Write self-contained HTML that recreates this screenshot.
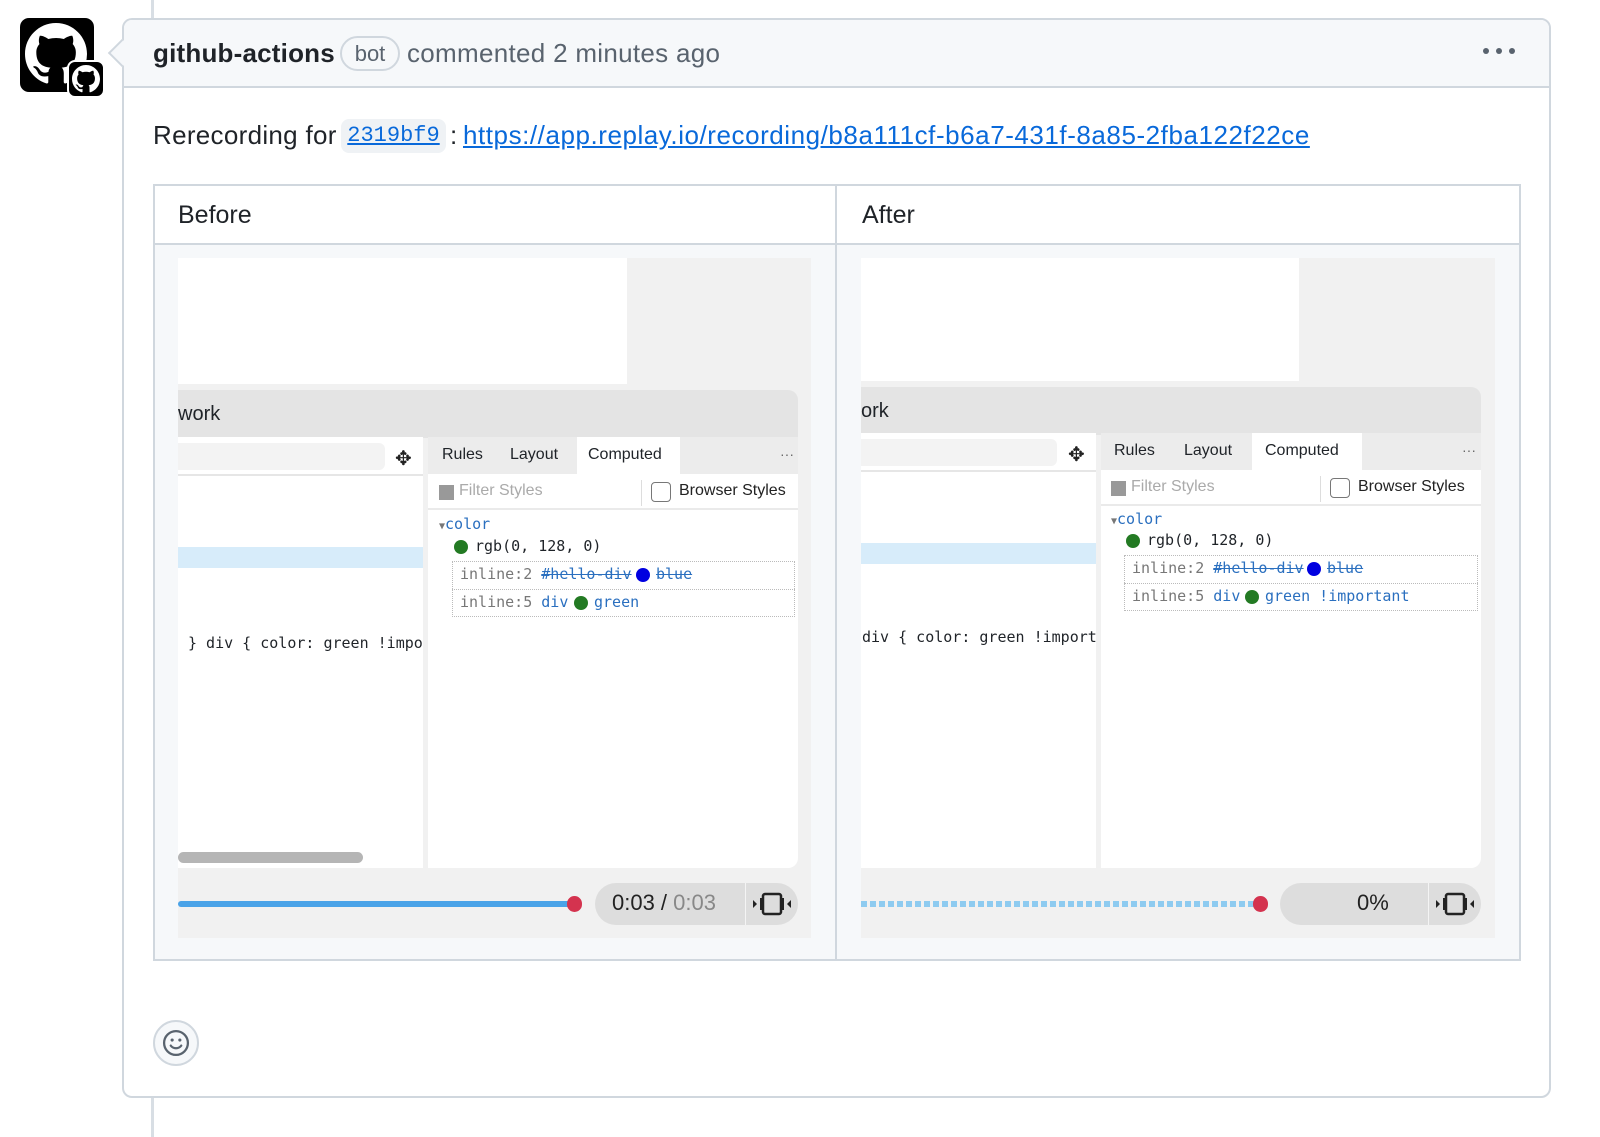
<!DOCTYPE html>
<html><head><meta charset="utf-8"><style>
*{box-sizing:border-box;margin:0;padding:0}
body{width:1600px;height:1137px;background:#fff;position:relative;overflow:hidden;font-family:"Liberation Sans",sans-serif;color:#1f2328}
.a{position:absolute}
.m{font-family:"Liberation Mono",monospace}
.mono{font-family:"DejaVu Sans Mono","Liberation Mono",monospace;font-size:15px}
</style></head><body>
<div class="a" style="left:151px;top:0;width:3px;height:1137px;background:#d8dee4"></div>
<div class="a" style="left:20px;top:18px;width:74px;height:74px;background:#000;border-radius:9px"></div>
<svg class="a" style="left:25px;top:23px" width="62" height="62" viewBox="0 0 16 16"><path fill="#fff" d="M8 0C3.58 0 0 3.58 0 8c0 3.54 2.290 6.53 5.47 7.59.4.07.55-.17.55-.38 0-.19-.01-.82-.01-1.49-2.01.37-2.53-.49-2.69-.94-.09-.23-.48-.94-.82-1.13-.28-.15-.68-.52-.01-.53.63-.01 1.08.58 1.23.82.72 1.21 1.87.87 2.33.66.07-.52.28-.87.51-1.07-1.78-.2-3.64-.89-3.64-3.95 0-.87.31-1.59.82-2.15-.08-.2-.36-1.02.08-2.12 0 0 .67-.21 2.2.82.64-.18 1.32-.27 2-.27.68 0 1.36.09 2 .27 1.53-1.04 2.2-.82 2.2-.82.44 1.1.16 1.92.08 2.12.51.56.82 1.27.82 2.15 0 3.07-1.87 3.75-3.65 3.95.29.25.54.73.54 1.48 0 1.07-.01 1.93-.01 2.2 0 .21.15.46.55.38A8.013 8.013 0 0016 8c0-4.42-3.58-8-8-8z"/></svg>
<div class="a" style="left:67px;top:60px;width:38px;height:38px;background:#000;border-radius:8px;border:2px solid #fff"></div>
<svg class="a" style="left:72px;top:65px" width="28" height="28" viewBox="0 0 16 16"><path fill="#fff" d="M8 0C3.58 0 0 3.58 0 8c0 3.54 2.29 6.53 5.47 7.59.4.07.55-.17.55-.38 0-.19-.01-.82-.01-1.49-2.01.37-2.53-.49-2.69-.94-.09-.23-.48-.94-.82-1.13-.28-.15-.68-.52-.01-.53.63-.01 1.08.58 1.23.82.72 1.21 1.87.87 2.33.66.07-.52.28-.87.51-1.07-1.78-.2-3.64-.89-3.64-3.95 0-.87.31-1.59.82-2.15-.08-.2-.36-1.02.08-2.12 0 0 .67-.21 2.2.82.64-.18 1.32-.27 2-.27.68 0 1.36.09 2 .27 1.53-1.04 2.2-.82 2.2-.82.44 1.1.16 1.92.08 2.12.51.56.82 1.27.82 2.15 0 3.07-1.87 3.75-3.65 3.95.29.25.54.73.54 1.48 0 1.07-.01 1.93-.01 2.2 0 .21.15.46.55.38A8.013 8.013 0 0016 8c0-4.42-3.58-8-8-8z"/></svg>
<div class="a" style="left:122px;top:18px;width:1429px;height:1080px;border:2px solid #d0d7de;border-radius:10px;background:#fff;overflow:hidden">
 <div style="height:68px;background:#f6f8fa;border-bottom:2px solid #d0d7de"></div>
</div>
<div class="a" style="left:112px;top:43px;width:20px;height:20px;background:#f6f8fa;border-left:2px solid #d0d7de;border-bottom:2px solid #d0d7de;transform:rotate(45deg)"></div>
<div class="a" style="left:153px;top:36px;font-size:26px;font-weight:bold;line-height:34px;letter-spacing:0.2px">github-actions</div>
<div class="a" style="left:340px;top:36px;width:60px;height:35px;border:2px solid #d0d7de;border-radius:18px;font-size:22px;color:#59636e;text-align:center;line-height:31px">bot</div>
<div class="a" style="left:407px;top:36px;font-size:26px;color:#59636e;line-height:34px;letter-spacing:0.3px">commented 2 minutes ago</div>
<div class="a" style="left:1483px;top:48px;width:32px;height:8px"><div class="a" style="left:0;top:0;width:6px;height:6px;border-radius:3px;background:#59636e"></div><div class="a" style="left:13px;top:0;width:6px;height:6px;border-radius:3px;background:#59636e"></div><div class="a" style="left:26px;top:0;width:6px;height:6px;border-radius:3px;background:#59636e"></div></div>
<div class="a" style="left:153px;top:118px;font-size:26px;line-height:34px;letter-spacing:0.3px">Rerecording for</div>
<div class="a m" style="left:341px;top:119px;width:105px;height:34px;background:#eff2f5;border-radius:8px;font-size:22px;line-height:34px;text-align:center;color:#0969da"><span style="text-decoration:underline">2319bf9</span></div>
<div class="a" style="left:450px;top:118px;font-size:26px;line-height:34px">:</div>
<div class="a" style="left:463px;top:118px;font-size:26px;line-height:34px;color:#0969da;text-decoration:underline;letter-spacing:0.55px">https://app.replay.io/recording/b8a111cf-b6a7-431f-8a85-2fba122f22ce</div>
<div class="a" style="left:153px;top:184px;width:1368px;height:777px;border:2px solid #d0d7de;background:#f6f8fa"></div>
<div class="a" style="left:155px;top:186px;width:1364px;height:59px;background:#fff;border-bottom:2px solid #d0d7de"></div>
<div class="a" style="left:835px;top:184px;width:2px;height:777px;background:#d0d7de"></div>
<div class="a" style="left:178px;top:200px;font-size:25px;line-height:30px">Before</div>
<div class="a" style="left:862px;top:200px;font-size:25px;line-height:30px">After</div>

<div class="a" style="left:178px;top:258px;width:633px;height:680px;background:#f1f1f1"></div>
<div class="a" style="left:178px;top:258px;width:449px;height:126px;background:#fff"></div>
<div class="a" style="left:178px;top:390px;width:620px;height:48px;background:#e4e4e4;border-radius:0 10px 0 0"></div>
<div class="a" style="left:178px;top:403px;font-size:20px">work</div>
<div class="a" style="left:178px;top:437px;width:245px;height:431px;background:#fff"></div>
<div class="a" style="left:178px;top:443px;width:207px;height:27px;background:#f3f3f3;border-radius:0 6px 6px 0"></div>
<div class="a" style="left:178px;top:474px;width:245px;height:2px;background:#e6e6e6"></div>
<div class="a" style="left:395px;top:446px;font-size:20px;color:#222">✥</div>
<div class="a" style="left:178px;top:547px;width:245px;height:21px;background:#d7ecfa"></div>
<div class="a mono" style="left:188px;top:634px;width:235px;overflow:hidden;white-space:nowrap">} div { color: green !important</div>
<div class="a" style="left:178px;top:852px;width:185px;height:11px;border-radius:6px;background:#b5b5b5"></div>
<div class="a" style="left:428px;top:437px;width:370px;height:431px;background:#fff;border-radius:0 0 10px 0"></div>
<div class="a" style="left:428px;top:437px;width:370px;height:37px;background:#ececec"></div>
<div class="a" style="left:577px;top:437px;width:103px;height:37px;background:#fff"></div>
<div class="a" style="left:442px;top:446px;font-size:16px">Rules</div>
<div class="a" style="left:510px;top:446px;font-size:16px">Layout</div>
<div class="a" style="left:588px;top:446px;font-size:16px">Computed</div>
<div class="a" style="left:780px;top:446px;font-size:14px;color:#666">···</div>
<div class="a" style="left:428px;top:508px;width:370px;height:2px;background:#eaeaea"></div>
<div class="a" style="left:439px;top:485px;width:15px;height:15px;background:#999"></div>
<div class="a" style="left:459px;top:482px;font-size:16px;color:#aaa">Filter Styles</div>
<div class="a" style="left:641px;top:480px;width:1px;height:26px;background:#ddd"></div>
<div class="a" style="left:651px;top:482px;width:20px;height:20px;border:1.5px solid #777;border-radius:4px"></div>
<div class="a" style="left:679px;top:482px;font-size:16px;color:#222">Browser Styles</div>
<div class="a mono" style="left:439px;top:515px;color:#2a6fbf"><span style="font-size:10px;color:#777">▼</span>color</div>
<div class="a" style="left:454px;top:540px;width:14px;height:14px;border-radius:7px;background:#237a23"></div>
<div class="a mono" style="left:475px;top:537px">rgb(0, 128, 0)</div>
<div class="a" style="left:452px;top:561px;width:343px;height:56px;border:1px dotted #bbb"></div>
<div class="a" style="left:452px;top:589px;width:343px;height:1px;border-top:1px dotted #bbb"></div>
<div class="a mono" style="left:460px;top:565px;color:#777">inline:2 <span style="color:#2a6fbf;text-decoration:line-through">#hello-div</span></div>
<div class="a" style="left:636px;top:568px;width:14px;height:14px;border-radius:7px;background:#0000e0"></div>
<div class="a mono" style="left:656px;top:565px;color:#2a6fbf;text-decoration:line-through">blue</div>
<div class="a mono" style="left:460px;top:593px;color:#777">inline:5 <span style="color:#2a6fbf">div</span></div>
<div class="a" style="left:574px;top:596px;width:14px;height:14px;border-radius:7px;background:#237a23"></div>
<div class="a mono" style="left:594px;top:593px;color:#2a6fbf">green</div>
<div class="a" style="left:178px;top:901px;width:397px;height:6px;background:#4aa3e8;border-radius:3px"></div>
<div class="a" style="left:567px;top:896px;width:15px;height:16px;border-radius:8px;background:#d4334f"></div>
<div class="a" style="left:595px;top:883px;width:203px;height:42px;background:#ddd;border-radius:21px"></div>
<div class="a" style="left:745px;top:883px;width:1px;height:42px;background:#f4f4f4"></div>
<div class="a" style="left:612px;top:890px;font-size:22px;color:#222">0:03 / <span style="color:#888">0:03</span></div>
<svg class="a" style="left:752px;top:890px" width="40" height="28" viewBox="0 0 40 28"><path d="M1 10l4 4-4 4z M39 10l-4 4 4 4z" fill="#222"/><rect x="11" y="4" width="18" height="20" rx="2" fill="none" stroke="#222" stroke-width="2.5"/><rect x="8" y="8" width="3" height="12" fill="#222"/><rect x="29" y="8" width="3" height="12" fill="#222"/></svg>

<div class="a" style="left:861px;top:258px;width:634px;height:680px;background:#f1f1f1"></div>
<div class="a" style="left:861px;top:258px;width:438px;height:123px;background:#fff"></div>
<div class="a" style="left:861px;top:387px;width:620px;height:48px;background:#e4e4e4;border-radius:0 10px 0 0"></div>
<div class="a" style="left:861px;top:400px;font-size:20px">ork</div>
<div class="a" style="left:861px;top:433px;width:235px;height:435px;background:#fff"></div>
<div class="a" style="left:861px;top:439px;width:196px;height:27px;background:#f3f3f3;border-radius:0 6px 6px 0"></div>
<div class="a" style="left:861px;top:470px;width:235px;height:2px;background:#e6e6e6"></div>
<div class="a" style="left:1068px;top:442px;font-size:20px;color:#222">✥</div>
<div class="a" style="left:861px;top:543px;width:235px;height:21px;background:#d7ecfa"></div>
<div class="a mono" style="left:862px;top:628px;width:234px;overflow:hidden;white-space:nowrap">div { color: green !important</div>
<div class="a" style="left:1101px;top:433px;width:380px;height:435px;background:#fff;border-radius:0 0 10px 0"></div>
<div class="a" style="left:1101px;top:433px;width:380px;height:37px;background:#ececec"></div>
<div class="a" style="left:1252px;top:433px;width:110px;height:37px;background:#fff"></div>
<div class="a" style="left:1114px;top:442px;font-size:16px">Rules</div>
<div class="a" style="left:1184px;top:442px;font-size:16px">Layout</div>
<div class="a" style="left:1265px;top:442px;font-size:16px">Computed</div>
<div class="a" style="left:1462px;top:442px;font-size:14px;color:#666">···</div>
<div class="a" style="left:1101px;top:504px;width:380px;height:2px;background:#eaeaea"></div>
<div class="a" style="left:1111px;top:481px;width:15px;height:15px;background:#999"></div>
<div class="a" style="left:1131px;top:478px;font-size:16px;color:#aaa">Filter Styles</div>
<div class="a" style="left:1320px;top:476px;width:1px;height:26px;background:#ddd"></div>
<div class="a" style="left:1330px;top:478px;width:20px;height:20px;border:1.5px solid #777;border-radius:4px"></div>
<div class="a" style="left:1358px;top:478px;font-size:16px;color:#222">Browser Styles</div>
<div class="a mono" style="left:1111px;top:510px;color:#2a6fbf"><span style="font-size:10px;color:#777">▼</span>color</div>
<div class="a" style="left:1126px;top:534px;width:14px;height:14px;border-radius:7px;background:#237a23"></div>
<div class="a mono" style="left:1147px;top:531px">rgb(0, 128, 0)</div>
<div class="a" style="left:1124px;top:555px;width:354px;height:56px;border:1px dotted #bbb"></div>
<div class="a" style="left:1124px;top:583px;width:354px;height:1px;border-top:1px dotted #bbb"></div>
<div class="a mono" style="left:1132px;top:559px;color:#777">inline:2 <span style="color:#2a6fbf;text-decoration:line-through">#hello-div</span></div>
<div class="a" style="left:1307px;top:562px;width:14px;height:14px;border-radius:7px;background:#0000e0"></div>
<div class="a mono" style="left:1327px;top:559px;color:#2a6fbf;text-decoration:line-through">blue</div>
<div class="a mono" style="left:1132px;top:587px;color:#777">inline:5 <span style="color:#2a6fbf">div</span></div>
<div class="a" style="left:1245px;top:590px;width:14px;height:14px;border-radius:7px;background:#237a23"></div>
<div class="a mono" style="left:1265px;top:587px;color:#2a6fbf">green !important</div>
<div class="a" style="left:861px;top:901px;width:398px;height:6px;background:repeating-linear-gradient(90deg,#8ecbf0 0 6px,transparent 6px 9px)"></div>
<div class="a" style="left:1253px;top:896px;width:15px;height:16px;border-radius:8px;background:#d4334f"></div>
<div class="a" style="left:1280px;top:883px;width:201px;height:42px;background:#ddd;border-radius:21px"></div>
<div class="a" style="left:1428px;top:883px;width:1px;height:42px;background:#f4f4f4"></div>
<div class="a" style="left:1357px;top:890px;font-size:22px;color:#222">0%</div>
<svg class="a" style="left:1435px;top:890px" width="40" height="28" viewBox="0 0 40 28"><path d="M1 10l4 4-4 4z M39 10l-4 4 4 4z" fill="#222"/><rect x="11" y="4" width="18" height="20" rx="2" fill="none" stroke="#222" stroke-width="2.5"/><rect x="8" y="8" width="3" height="12" fill="#222"/><rect x="29" y="8" width="3" height="12" fill="#222"/></svg>

<div class="a" style="left:153px;top:1020px;width:46px;height:46px;border:2px solid #d0d7de;border-radius:23px;background:#f6f8fa"></div>
<svg class="a" style="left:162px;top:1029px" width="28" height="28" viewBox="0 0 16 16"><circle cx="8" cy="8" r="6.8" fill="none" stroke="#59636e" stroke-width="1.3"/><circle cx="5.8" cy="6.3" r="0.9" fill="#59636e"/><circle cx="10.2" cy="6.3" r="0.9" fill="#59636e"/><path d="M5 9.5c1.5 2 4.5 2 6 0" fill="none" stroke="#59636e" stroke-width="1.3" stroke-linecap="round"/></svg>
</body></html>
